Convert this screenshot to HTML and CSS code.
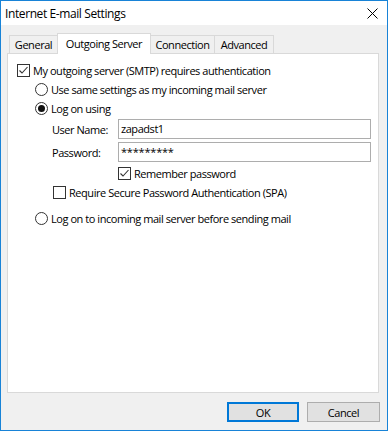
FILE: index.html
```html
<!DOCTYPE html>
<html lang="en">
<head>
  <meta charset="utf-8">
  <title>Internet E-mail Settings</title>
  <link rel="stylesheet" href="styles.css">
</head>
<body>
  <div class="window">
    <div class="titlebar">
      <span class="title">Internet E-mail Settings</span>
      <svg class="close" width="11" height="11" viewBox="0 0 11 11">
        <path d="M0.5 0.5L10.5 10.5M10.5 0.5L0.5 10.5" stroke="#000" stroke-width="1" fill="none"/>
      </svg>
    </div>

    <div class="dialog">
      <div class="tabs">
        <div class="tab tab-general">General</div>
        <div class="tab tab-outgoing active">Outgoing Server</div>
        <div class="tab tab-connection">Connection</div>
        <div class="tab tab-advanced">Advanced</div>
      </div>

      <div class="panel">
        <div class="row">
          <span class="check">
            <svg width="13" height="13" viewBox="0 0 13 13"><rect x="0.5" y="0.5" width="12" height="12" fill="#fff" stroke="#333"/><path d="M2.5 6.5L5 9L10.5 3" stroke="#333" stroke-width="1.1" fill="none"/></svg>
          </span>
          <span>My outgoing server (SMTP) requires authentication</span>
        </div>
        <div class="row indent-1">
          <span class="check">
            <svg width="13" height="13" viewBox="0 0 13 13"><circle cx="6.5" cy="6.5" r="6" fill="#fff" stroke="#333"/></svg>
          </span>
          <span>Use same settings as my incoming mail server</span>
        </div>
        <div class="row indent-1">
          <span class="check">
            <svg width="13" height="13" viewBox="0 0 13 13"><circle cx="6.5" cy="6.5" r="6" fill="#fff" stroke="#333"/><circle cx="6.5" cy="6.5" r="3.5" fill="#111"/></svg>
          </span>
          <span>Log on using</span>
        </div>

        <div class="field field-user">
          <span class="field-label">User Name:</span>
          <div class="input">zapadst1</div>
        </div>
        <div class="field field-pass">
          <span class="field-label">Password:</span>
          <div class="input input-pass">*********</div>
        </div>

        <div class="row row-remember">
          <span class="check">
            <svg width="13" height="13" viewBox="0 0 13 13"><rect x="0.5" y="0.5" width="12" height="12" fill="#fff" stroke="#333"/><path d="M2.5 6.5L5 9L10.5 3" stroke="#333" stroke-width="1.1" fill="none"/></svg>
          </span>
          <span>Remember password</span>
        </div>
        <div class="row row-spa">
          <span class="check">
            <svg width="13" height="13" viewBox="0 0 13 13"><rect x="0.5" y="0.5" width="12" height="12" fill="#fff" stroke="#333"/></svg>
          </span>
          <span>Require Secure Password Authentication (SPA)</span>
        </div>

        <div class="row indent-1 row-incoming">
          <span class="check">
            <svg width="13" height="13" viewBox="0 0 13 13"><circle cx="6.5" cy="6.5" r="6" fill="#fff" stroke="#333"/></svg>
          </span>
          <span>Log on to incoming mail server before sending mail</span>
        </div>
      </div>

      <div class="buttons">
        <button class="btn btn-default">OK</button>
        <button class="btn">Cancel</button>
      </div>
    </div>
  </div>
</body>
</html>
```

FILE: styles.css
```css
html, body {
  margin: 0;
  padding: 0;
  background: #fff;
}

body {
  font-family: "Open Sans", "Noto Sans", sans-serif;
  font-size: 11px;
  letter-spacing: -0.45px;
  color: #000;
}

.window {
  width: 388px;
  height: 431px;
  box-sizing: border-box;
  border: 1px solid #1883d7;
  display: flex;
  flex-direction: column;
}

.titlebar {
  height: 24px;
  background: #fff;
  display: flex;
  align-items: center;
  padding-left: 4px;
}

.title {
  font-size: 12px;
  letter-spacing: -0.4px;
}

.close {
  margin-left: auto;
  margin-right: 9px;
}

.dialog {
  flex: 1;
  background: #f0f0f0;
  padding: 8px 8px 8px 6px;
  display: flex;
  flex-direction: column;
}

/* tabs */
.tabs {
  height: 20px;
  display: flex;
  align-items: flex-end;
  margin-left: 2px;
}

.tab {
  height: 18px;
  box-sizing: border-box;
  border: 1px solid #d9d9d9;
  border-bottom: none;
  border-right: none;
  text-align: center;
  line-height: 16px;
  padding-top: 1px;
  background: #f0f0f0;
}

.tab-general { width: 48px; }
.tab-outgoing { width: 94px; }
.tab-connection { width: 64px; }
.tab-advanced { width: 60px; border-right: 1px solid #d9d9d9; }

.tab.active {
  height: 21px;
  margin-bottom: -1px;
  margin-right: -1px;
  border-right: 1px solid #d9d9d9;
  background: #fff;
  padding-top: 2px;
  position: relative;
  z-index: 1;
}

/* panel */
.panel {
  flex: 1;
  background: #fff;
  border: 1px solid #d9d9d9;
  padding: 7px 0 0 9px;
}

.row {
  height: 19px;
  display: flex;
  align-items: center;
}

.check {
  width: 13px;
  height: 13px;
  margin-right: 3px;
  display: flex;
}

.indent-1 { margin-left: 18px; }

.field {
  height: 20px;
  display: flex;
  align-items: center;
  margin-left: 35px;
}

.field-user { margin-top: 1px; }
.field-pass { margin-top: 3px; }

.field-label {
  width: 66px;
}

.input {
  width: 253px;
  height: 20px;
  box-sizing: border-box;
  border: 1px solid #adadad;
  padding-left: 2px;
  line-height: 18px;
}

.input-pass {
  letter-spacing: -0.2px;
}

.row-remember {
  margin-top: 2px;
  margin-left: 101px;
}

.row-spa {
  margin-left: 36px;
}

.row-incoming {
  margin-top: 7px;
}

/* buttons */
.buttons {
  margin-top: 9px;
  margin-right: -1px;
  display: flex;
  justify-content: flex-end;
  gap: 8px;
}

.btn {
  width: 73px;
  height: 20px;
  box-sizing: border-box;
  border: 1px solid #adadad;
  background: #e1e1e1;
  font-family: inherit;
  font-size: 11px;
  letter-spacing: -0.45px;
  color: #000;
  padding: 0;
}

.btn-default {
  width: 72px;
  border: 2px solid #0078d7;
}
```
